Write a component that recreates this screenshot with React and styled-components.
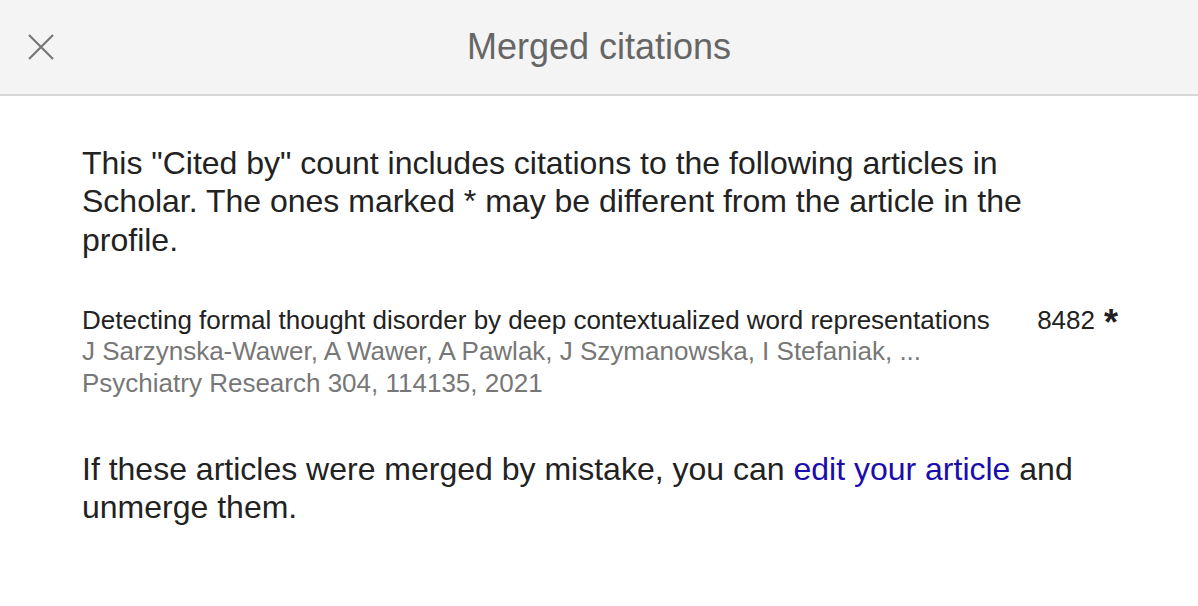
import styled, { createGlobalStyle } from "styled-components"

const GlobalStyle = createGlobalStyle`
  html, body {
    margin: 0;
    padding: 0;
    background: #fff;
  }
  body {
    font-family: "Liberation Sans", Arial, sans-serif;
  }
`

const Dialog = styled.div`
  width: 1198px;
  min-height: 606px;
  background: #fff;
`

const Header = styled.div`
  height: 94px;
  background: #f4f4f4;
  border-bottom: 2px solid #d8d8d8;
  display: flex;
  align-items: center;
  justify-content: center;
  position: relative;
`

const CloseButton = styled.button`
  position: absolute;
  left: 22px;
  top: 28px;
  width: 38px;
  height: 38px;
  padding: 0;
  border: none;
  background: none;
  display: flex;
  align-items: center;
  justify-content: center;
  cursor: pointer;
`

const Title = styled.h1`
  margin: 0;
  font-size: 36px;
  font-weight: normal;
  color: #666;
`

const Body = styled.div`
  padding: 48px 80px 0 82px;
`

const Text = styled.p`
  margin: 0;
  font-size: 32px;
  line-height: 38.4px;
  color: #222;
`

const Article = styled.div`
  margin: 46px 0 51px;
  display: flex;
  align-items: flex-start;
  font-size: 26px;
  line-height: 31.2px;
`

const ArticleInfo = styled.div`
  flex: 1;
`

const ArticleTitle = styled.div`
  color: #222;
`

const Meta = styled.div`
  color: #777;
`

const Count = styled.div`
  color: #222;
  white-space: nowrap;
  display: flex;
  align-items: flex-start;
  gap: 9px;
`

const Star = styled.span`
  font-size: 36px;
  font-weight: bold;
  line-height: 36px;
`

const Link = styled.a`
  color: #1a0dab;
  text-decoration: none;
`

const CloseIcon = () => (
  <svg width="26" height="26" viewBox="0 0 26 26">
    <path d="M1 1L25 25M25 1L1 25" stroke="#777" strokeWidth="2.2" fill="none" />
  </svg>
)

const App = () => {
  return (
    <Dialog>
      <GlobalStyle />
      <Header>
        <CloseButton aria-label="Close">
          <CloseIcon />
        </CloseButton>
        <Title>Merged citations</Title>
      </Header>
      <Body>
        <Text>
          This "Cited by" count includes citations to the following articles in
          Scholar. The ones marked * may be different from the article in the
          profile.
        </Text>
        <Article>
          <ArticleInfo>
            <ArticleTitle>Detecting formal thought disorder by deep contextualized word representations</ArticleTitle>
            <Meta>J Sarzynska-Wawer, A Wawer, A Pawlak, J Szymanowska, I Stefaniak, ...</Meta>
            <Meta>Psychiatry Research 304, 114135, 2021</Meta>
          </ArticleInfo>
          <Count>
            8482 <Star>*</Star>
          </Count>
        </Article>
        <Text>
          If these articles were merged by mistake, you can <Link href="#">edit your article</Link> and
          unmerge them.
        </Text>
      </Body>
    </Dialog>
  )
}

export default App
